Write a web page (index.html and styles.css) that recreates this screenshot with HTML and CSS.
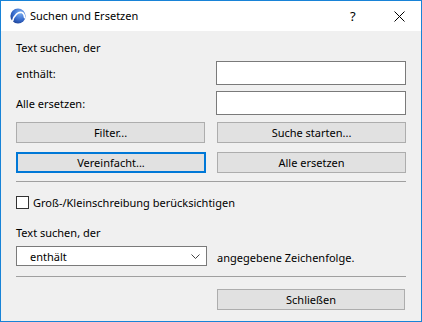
FILE: index.html
```html
<!DOCTYPE html>
<html lang="de">
<head>
	<meta charset="UTF-8">
	<title>Suchen und Ersetzen</title>
	<link rel="stylesheet" href="styles.css">
</head>
<body>
	<div class="window">
		<div class="titlebar">
			<svg class="app_icon" width="16" height="16" viewBox="0 0 16 16">
				<defs>
					<radialGradient id="ball" cx="0.65" cy="0.3" r="0.8">
						<stop offset="0" stop-color="#7fb0f0"/>
						<stop offset="0.55" stop-color="#3a6fd0"/>
						<stop offset="1" stop-color="#1b3c8e"/>
					</radialGradient>
				</defs>
				<circle cx="8" cy="8" r="7.6" fill="url(#ball)"/>
				<path d="M2.6 13.2 C4 6.5 8.5 3.6 12 4.6 C13.6 5.2 14.4 7 14.6 9.6" fill="none" stroke="#fff" stroke-width="1.6" stroke-linecap="round"/>
			</svg>
			<span class="title">Suchen und Ersetzen</span>
			<span class="help">?</span>
			<svg class="close" width="11" height="11" viewBox="0 0 11 11">
				<path d="M0.5 0.5 L10.5 10.5 M10.5 0.5 L0.5 10.5" stroke="#000" stroke-width="1"/>
			</svg>
		</div>
		<div class="content">
			<div class="label first">Text suchen, der</div>
			<div class="field_row">
				<span>enthält:</span>
				<input type="text">
			</div>
			<div class="field_row">
				<span>Alle ersetzen:</span>
				<input type="text">
			</div>
			<div class="btn_grid">
				<button>Filter...</button>
				<button>Suche starten...</button>
				<button class="focused">Vereinfacht...</button>
				<button>Alle ersetzen</button>
			</div>
			<div class="sep"></div>
			<div class="check_row">
				<span class="box"></span>
				<span>Groß-/Kleinschreibung berücksichtigen</span>
			</div>
			<div class="label second">Text suchen, der</div>
			<div class="select_row">
				<div class="select">
					<span>enthält</span>
					<svg width="9" height="5" viewBox="0 0 9 5"><path d="M0.5 0.5 L4.5 4.5 L8.5 0.5" fill="none" stroke="#444" stroke-width="1"/></svg>
				</div>
				<span class="after">angegebene Zeichenfolge.</span>
			</div>
			<div class="sep low"></div>
			<div class="footer">
				<button>Schließen</button>
			</div>
		</div>
	</div>
</body>
</html>
```

FILE: styles.css
```css
* {
	box-sizing: border-box;
}
body {
	margin: 0;
	font-family: "Noto Sans", "Open Sans", sans-serif;
	font-size: 11px;
	color: #000;
}
.window {
	width: 422px;
	height: 322px;
	border: 1px solid #1883d7;
	display: flex;
	flex-direction: column;
	background: #f0f0f0;
}
.titlebar {
	height: 30px;
	background: #fff;
	display: flex;
	align-items: center;
	padding-left: 9px;
}
.app_icon {
	margin-right: 4px;
}
.title {
	flex: 1;
	line-height: 16px;
}
.help {
	width: 6px;
	margin-right: 38px;
	font-size: 13px;
}
.close {
	margin-right: 16px;
}
.content {
	flex: 1;
	padding: 9px 15px 0 15px;
}
.label {
	line-height: 16px;
	height: 16px;
}
.label.second {
	margin-top: 16px;
}
.field_row {
	display: flex;
	justify-content: space-between;
	align-items: center;
	height: 24px;
	margin-top: 5px;
}
.field_row + .field_row {
	margin-top: 6px;
}
.field_row input {
	width: 190px;
	height: 24px;
	margin: 0;
	padding: 0 3px;
	border: 1px solid #7a7a7a;
	background: #fff;
	font: inherit;
}
button {
	height: 21px;
	margin: 0;
	padding: 0;
	border: 1px solid #adadad;
	background: #e1e1e1;
	font: inherit;
	color: #000;
}
.btn_grid {
	display: grid;
	grid-template-columns: 189px 189px;
	column-gap: 12px;
	row-gap: 9px;
	margin-top: 7px;
}
.btn_grid button.focused {
	border: 2px solid #0078d7;
	width: 190px;
}
.sep {
	height: 1px;
	background: #a0a0a0;
	margin-top: 8px;
}
.sep.low {
	margin-top: 10px;
}
.check_row {
	display: flex;
	align-items: center;
	height: 13px;
	margin-top: 14px;
}
.check_row .box {
	width: 13px;
	height: 13px;
	border: 1px solid #333;
	background: #fff;
	margin-right: 4px;
}
.select_row {
	display: flex;
	align-items: center;
	margin-top: 5px;
	height: 20px;
}
.select {
	width: 191px;
	height: 20px;
	border: 1px solid #7a7a7a;
	background: #fff;
	display: flex;
	align-items: center;
	justify-content: space-between;
	padding: 0 6px 0 13px;
}
.select svg {
	display: block;
}
.after {
	margin-left: 10px;
	padding-top: 3px;
}
.footer {
	display: flex;
	justify-content: flex-end;
	margin-top: 12px;
}
.footer button {
	width: 188px;
	margin-right: 1px;
}
```
